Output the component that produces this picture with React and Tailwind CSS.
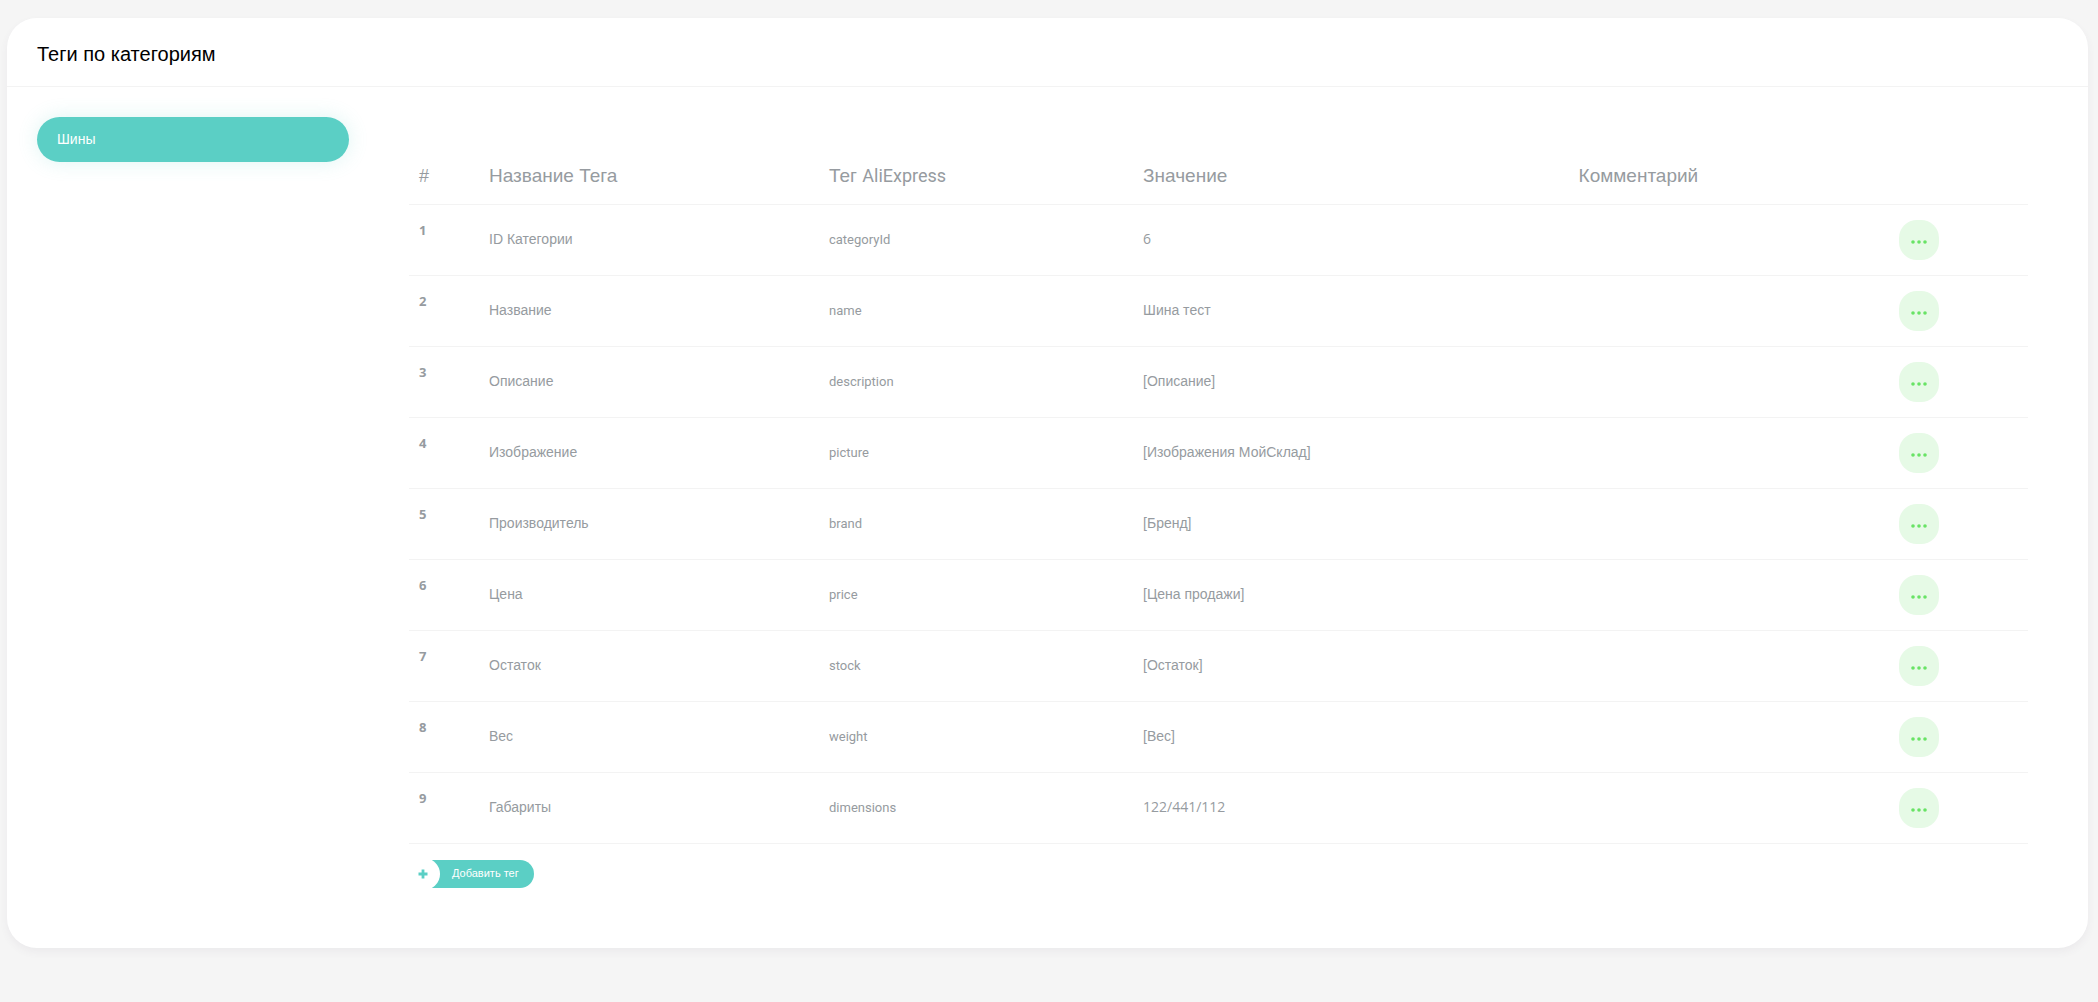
import React, { useState } from 'react';

const categories = ['Шины'];

const tags = [
  { name: 'ID Категории', tag: 'categoryId', value: '6' },
  { name: 'Название', tag: 'name', value: 'Шина тест' },
  { name: 'Описание', tag: 'description', value: '[Описание]' },
  { name: 'Изображение', tag: 'picture', value: '[Изображения МойСклад]' },
  { name: 'Производитель', tag: 'brand', value: '[Бренд]' },
  { name: 'Цена', tag: 'price', value: '[Цена продажи]' },
  { name: 'Остаток', tag: 'stock', value: '[Остаток]' },
  { name: 'Вес', tag: 'weight', value: '[Вес]' },
  { name: 'Габариты', tag: 'dimensions', value: '122/441/112' },
];

// numeric values use the same face as the row numbers
const isNumeric = (value) => /^[\d/]+$/.test(value);

function MoreButton({ label }) {
  return (
    <button
      type="button"
      aria-label={label}
      className="flex size-10 items-center justify-center rounded-[18px] bg-[#e6fae6] pt-1 text-[#68e365] hover:bg-[#d5f5d5]"
    >
      <svg width="16" height="4" viewBox="0 0 16 4" fill="currentColor">
        <circle cx="2" cy="2" r="1.8" />
        <circle cx="8" cy="2" r="1.8" />
        <circle cx="14" cy="2" r="1.8" />
      </svg>
    </button>
  );
}

function App() {
  const [active, setActive] = useState('Шины');

  return (
    <div className="min-h-screen bg-[#f5f5f5] pt-[18px] pr-2.5 pb-10 pl-[7px] font-['Liberation_Sans',Arial,sans-serif] text-sm text-[#969ba0]">
      <div className="rounded-[30px] bg-white shadow-[0_4px_8px_rgba(82,63,105,0.06)]">
        <header className="border-b border-[#f3f3f3] px-[30px] pt-[22px] pb-[18px]">
          <h1 className="text-xl leading-7 text-black">Теги по категориям</h1>
        </header>

        <div className="flex gap-[60px] pt-[30px] pr-[60px] pb-[60px] pl-[30px]">
          {/* Categories */}
          <nav className="w-[312px] shrink-0">
            {categories.map((category) => (
              <button
                key={category}
                type="button"
                onClick={() => setActive(category)}
                className={
                  active === category
                    ? 'h-[45px] w-full rounded-full bg-[#5bcfc5] px-5 pb-0.5 text-left text-white shadow-[0_0_20px_rgba(91,207,197,0.2)]'
                    : 'h-[45px] w-full rounded-full px-5 pb-0.5 text-left'
                }
              >
                {category}
              </button>
            ))}
          </nav>

          {/* Tags table */}
          <div className="min-w-0 flex-1 pt-[30px]">
            <table className="w-full table-fixed border-collapse text-left">
              <thead>
                <tr className="text-[19px] leading-[26px]">
                  <th className="w-[70px] px-2.5 pt-4 pb-[15px] text-lg leading-[26px] font-normal">#</th>
                  <th className="w-[21%] px-2.5 pt-4 pb-[15px] font-normal">Название Тега</th>
                  <th className="w-[19.4%] px-2.5 pt-4 pb-[15px] font-normal">
                    Тег <span className="font-['Roboto',sans-serif] text-lg leading-[26px]">AliExpress</span>
                  </th>
                  <th className="w-[26.9%] px-2.5 pt-4 pb-[15px] font-normal">Значение</th>
                  <th className="w-[19.8%] px-2.5 pt-4 pb-[15px] font-normal">Комментарий</th>
                  <th className="px-2.5 pt-4 pb-[15px]"></th>
                </tr>
              </thead>
              <tbody>
                {tags.map((row, index) => (
                  <tr key={row.tag} className="border-y border-[#f3f3f3]">
                    <th
                      scope="row"
                      className="px-2.5 py-[15px] align-top font-['Open_Sans',sans-serif] text-[13px] leading-5 font-bold"
                    >
                      {index + 1}
                    </th>
                    <td className="px-2.5 pt-3.5 pb-4">{row.name}</td>
                    <td className="px-2.5 py-[15px] font-['Roboto',sans-serif] text-[13px]">{row.tag}</td>
                    <td
                      className={
                        isNumeric(row.value)
                          ? "px-2.5 pt-3.5 pb-4 font-['Open_Sans',sans-serif]"
                          : 'px-2.5 pt-3.5 pb-4'
                      }
                    >
                      {row.value}
                    </td>
                    <td className="px-2.5 py-[15px]"></td>
                    <td className="px-2.5 py-[15px]">
                      <MoreButton label={`Действия: ${row.name}`} />
                    </td>
                  </tr>
                ))}
              </tbody>
            </table>

            <button
              type="button"
              className="mt-4 flex h-7 items-center overflow-hidden rounded-r-full bg-[#5bcfc5] pr-[15px] text-[11px] text-white"
            >
              <span className="mr-3 flex h-8 w-[31px] shrink-0 items-center justify-center rounded-r-2xl bg-white pr-[3px] text-[#5bcfc5]">
                <svg width="10" height="10" viewBox="0 0 10 10" fill="currentColor">
                  <path d="M3.6 .5h2.8v3.1h3.1v2.8H6.4v3.1H3.6V6.4H.5V3.6h3.1z" />
                </svg>
              </span>
              Добавить тег
            </button>
          </div>
        </div>
      </div>
    </div>
  );
}

export default App;
